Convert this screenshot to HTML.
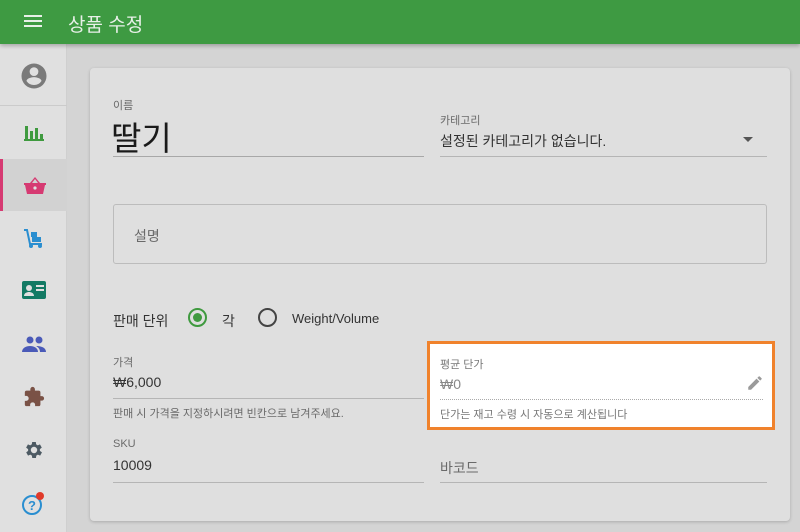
<!DOCTYPE html>
<html><head><meta charset="utf-8"><style>
*{box-sizing:border-box;margin:0;padding:0}
body{width:800px;height:532px;overflow:hidden;background:#d4d4d4;font-family:"Liberation Sans","Noto Sans CJK KR",sans-serif;position:relative;color:#222}
.hdr{position:absolute;left:0;top:0;width:800px;height:44px;background:#3e9a42;box-shadow:0 2px 4px rgba(0,0,0,.25);z-index:2}
.hdr .t{position:absolute;left:68px;top:10px;color:#e8f0e8;font-size:19px}
.hb{position:absolute;left:24px;top:15px;width:18px;height:2px;background:#e8f0e8;box-shadow:0 5px 0 #e8f0e8,0 10px 0 #e8f0e8}
.side{position:absolute;left:0;top:44px;width:67px;height:488px;background:#e0e0e0;border-right:1px solid #cfcfcf}
.it{position:absolute;left:0;width:67px;height:52px;display:flex;align-items:center;justify-content:center}
.card{position:absolute;left:90px;top:68px;width:700px;height:453px;background:#dfdfdf;border-radius:4px;box-shadow:0 1px 3px rgba(0,0,0,.2)}
.a{position:absolute;white-space:nowrap}
.lbl{font-size:11px;color:#6a6a6a}
.line{position:absolute;height:1px;background:#b5b5b5}
</style></head><body>
<div class="hdr"><div class="hb"></div><div class="t">상품 수정</div></div>
<div class="side">
<div class="it" style="top:4px;height:56px"><svg width="30" height="30" viewBox="0 0 24 24"><path fill="#7a7a7a" d="M12 2a10 10 0 100 20 10 10 0 000-20zm0 3a3.5 3.5 0 110 7 3.5 3.5 0 010-7zm0 14.2a7.2 7.2 0 01-6-3.2c0-2 4-3.1 6-3.1s6 1.1 6 3.1a7.2 7.2 0 01-6 3.2z"/></svg></div>
<div style="position:absolute;left:0;top:61px;width:67px;height:1px;background:#cbcbcb"></div>
<div class="it" style="top:62px"><svg width="20" height="18" viewBox="0 0 20 18"><path fill="#3f9a3f" d="M1 3h3v14H1zM6 8h3v9H6zM11 5h3v12h-3zM16 11h3v6h-3z"/><path fill="#3f9a3f" d="M0 16h20v2H0z"/></svg></div>
<div class="it" style="top:115px;background:#d2d2d2;border-left:3px solid #d63a72"><svg width="22" height="20" viewBox="0 0 22 20"><path fill="#d63a72" d="M0 8h22v2h-1l-2 9H3L1 10H0zM6 8l5-6 5 6h-2l-3-4-3 4z"/><circle cx="11" cy="13" r="1.6" fill="#e0e0e0"/></svg></div>
<div class="it" style="top:168px"><svg width="24" height="24" viewBox="0 0 24 24"><path fill="none" stroke="#2a8ed0" stroke-width="2" d="M2 4h3l3 14h12"/><rect x="9" y="6" width="6" height="5" fill="#2a8ed0"/><rect x="10" y="11" width="9" height="5" fill="#2a8ed0"/><circle cx="9" cy="20" r="2" fill="#2a8ed0"/><circle cx="18" cy="20" r="2" fill="#2a8ed0"/></svg></div>
<div class="it" style="top:221px"><svg width="24" height="20" viewBox="0 0 24 20"><rect width="24" height="18" rx="2" fill="#137a64"/><circle cx="7" cy="7" r="3" fill="#e0e0e0"/><path fill="#e0e0e0" d="M2 15c0-3 3-4 5-4s5 1 5 4zM14 4h8v2h-8zM14 8h8v2h-8z"/></svg></div>
<div class="it" style="top:274px"><svg width="24" height="16" viewBox="0 0 24 16"><circle cx="8" cy="4" r="3.5" fill="#4a5ab8"/><circle cx="17" cy="4" r="3.5" fill="#4a5ab8"/><path fill="#4a5ab8" d="M0 16c0-4 4-6 8-6s8 2 8 6zM14 10c4 0 10 1 10 6h-6c0-3-2-5-4-6z"/></svg></div>
<div class="it" style="top:327px"><svg width="22" height="22" viewBox="0 0 24 24"><path fill="#7a5246" d="M20.5 11H19V7a2 2 0 00-2-2h-4V3.5a2.5 2.5 0 00-5 0V5H4a2 2 0 00-2 2v3.8h1.5a2.7 2.7 0 010 5.4H2V20a2 2 0 002 2h3.8v-1.5a2.7 2.7 0 015.4 0V22H17a2 2 0 002-2v-4h1.5a2.5 2.5 0 000-5z"/></svg></div>
<div class="it" style="top:380px"><svg width="22" height="22" viewBox="0 0 24 24"><path fill="#4d5a63" d="M19.4 13a7.5 7.5 0 000-2l2.1-1.6-2-3.5-2.5 1a7 7 0 00-1.7-1L15 3.3h-4l-.4 2.6a7 7 0 00-1.7 1l-2.5-1-2 3.5L6.6 11a7.5 7.5 0 000 2l-2.1 1.6 2 3.5 2.5-1a7 7 0 001.7 1l.4 2.6h4l.4-2.6a7 7 0 001.7-1l2.5 1 2-3.5zM13 15.5a3.5 3.5 0 110-7 3.5 3.5 0 010 7z" transform="translate(-1 0)"/></svg></div>
<div class="it" style="top:433px"><svg width="26" height="26" viewBox="0 0 26 26"><circle cx="11" cy="15" r="9" fill="none" stroke="#2a8ed0" stroke-width="2"/><text x="11" y="20" font-size="13" text-anchor="middle" fill="#2a8ed0" font-family="Liberation Sans" font-weight="bold">?</text><circle cx="19" cy="6" r="4" fill="#e03a2a"/></svg></div>
</div>
<div class="card">
<div class="a lbl" style="left:23px;top:29px">이름</div>
<div class="a" style="left:21px;top:44px;font-size:33px;color:#1a1a1a">딸기</div>
<div class="line" style="left:23px;top:88px;width:311px;background:#a8a8a8"></div>
<div class="a lbl" style="left:350px;top:44px">카테고리</div>
<div class="a" style="left:350px;top:63px;font-size:14px;color:#333">설정된 카테고리가 없습니다.</div>
<div class="a" style="left:653px;top:69px;width:0;height:0;border-left:5px solid transparent;border-right:5px solid transparent;border-top:5px solid #555"></div>
<div class="line" style="left:350px;top:88px;width:327px"></div>
<div style="position:absolute;left:23px;top:136px;width:654px;height:60px;border:1px solid #bcbcbc;border-radius:3px"></div>
<div class="a" style="left:44px;top:158px;font-size:14px;color:#6a6a6a">설명</div>
<div class="a" style="left:23px;top:243px;font-size:14px;color:#333">판매 단위</div>
<div style="position:absolute;left:98px;top:240px;width:19px;height:19px;border:2px solid #3f9a3f;border-radius:50%"><div style="position:absolute;left:3px;top:3px;width:9px;height:9px;border-radius:50%;background:#3f9a3f"></div></div>
<div class="a" style="left:132px;top:243px;font-size:14px;color:#333">각</div>
<div style="position:absolute;left:168px;top:240px;width:19px;height:19px;border:2px solid #444;border-radius:50%"></div>
<div class="a" style="left:202px;top:243px;font-size:13px;color:#333">Weight/Volume</div>
<div class="a lbl" style="left:23px;top:286px">가격</div>
<div class="a" style="left:23px;top:306px;font-size:14px;color:#333">₩6,000</div>
<div class="line" style="left:23px;top:330px;width:311px"></div>
<div class="a" style="left:23px;top:337px;font-size:11px;color:#6a6a6a">판매 시 가격을 지정하시려면 빈칸으로 남겨주세요.</div>
<div class="a lbl" style="left:23px;top:370px">SKU</div>
<div class="a" style="left:23px;top:389px;font-size:14px;color:#333">10009</div>
<div class="line" style="left:23px;top:414px;width:311px"></div>
<div class="a" style="left:350px;top:390px;font-size:14px;color:#6a6a6a">바코드</div>
<div class="line" style="left:350px;top:414px;width:327px"></div>
</div>
<div style="position:absolute;left:427px;top:341px;width:348px;height:89px;background:#fff;border:3px solid #f0822c">
<div class="a" style="left:10px;top:12px;font-size:11px;color:#777">평균 단가</div>
<div class="a" style="left:10px;top:32px;font-size:14px;color:#888">₩0</div>
<svg style="position:absolute;left:316px;top:30px" width="18" height="18" viewBox="0 0 24 24"><path fill="#9a9a9a" d="M3 17.25V21h3.75L17.8 9.94l-3.75-3.75zM20.7 7.04a1 1 0 000-1.41l-2.34-2.34a1 1 0 00-1.41 0l-1.83 1.83 3.75 3.75z"/></svg>
<div style="position:absolute;left:10px;top:55px;width:323px;border-top:1px dotted #aaa"></div>
<div class="a" style="left:10px;top:62px;font-size:11px;color:#777">단가는 재고 수령 시 자동으로 계산됩니다</div>
</div>
</body></html>
